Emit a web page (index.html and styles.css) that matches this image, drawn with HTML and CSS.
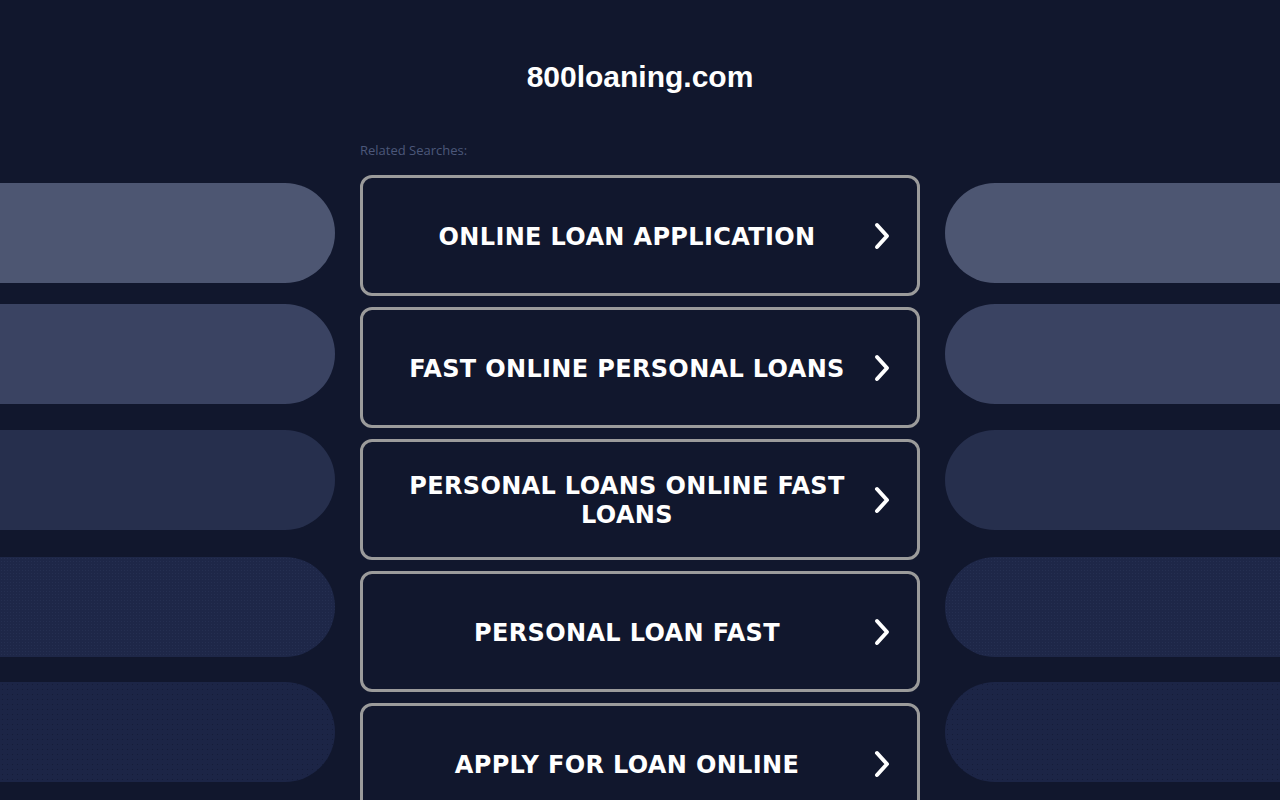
FILE: index.html
```html
<!DOCTYPE html>
<html lang="en">
<head>
<meta charset="utf-8">
<title>800loaning.com</title>
<link rel="stylesheet" href="styles.css">
</head>
<body>
<div class="page">
  <aside class="side side-left">
    <div class="pill p1"></div>
    <div class="pill p2"></div>
    <div class="pill p3"></div>
    <div class="pill p4"></div>
    <div class="pill p5"></div>
  </aside>
  <main class="center">
    <h1 class="title">800loaning.com</h1>
    <div class="related">Related Searches:</div>
    <div class="links">
      <a class="link" href="#"><span class="label">ONLINE LOAN APPLICATION</span><svg class="chev" width="16" height="28" viewBox="0 0 16 28"><polyline points="3,3 13,14 3,25" fill="none" stroke="#fff" stroke-width="4" stroke-linecap="round" stroke-linejoin="round"/></svg></a>
      <a class="link" href="#"><span class="label">FAST ONLINE PERSONAL LOANS</span><svg class="chev" width="16" height="28" viewBox="0 0 16 28"><polyline points="3,3 13,14 3,25" fill="none" stroke="#fff" stroke-width="4" stroke-linecap="round" stroke-linejoin="round"/></svg></a>
      <a class="link" href="#"><span class="label">PERSONAL LOANS ONLINE FAST LOANS</span><svg class="chev" width="16" height="28" viewBox="0 0 16 28"><polyline points="3,3 13,14 3,25" fill="none" stroke="#fff" stroke-width="4" stroke-linecap="round" stroke-linejoin="round"/></svg></a>
      <a class="link" href="#"><span class="label">PERSONAL LOAN FAST</span><svg class="chev" width="16" height="28" viewBox="0 0 16 28"><polyline points="3,3 13,14 3,25" fill="none" stroke="#fff" stroke-width="4" stroke-linecap="round" stroke-linejoin="round"/></svg></a>
      <a class="link" href="#"><span class="label">APPLY FOR LOAN ONLINE</span><svg class="chev" width="16" height="28" viewBox="0 0 16 28"><polyline points="3,3 13,14 3,25" fill="none" stroke="#fff" stroke-width="4" stroke-linecap="round" stroke-linejoin="round"/></svg></a>
    </div>
  </main>
  <aside class="side side-right">
    <div class="pill p1"></div>
    <div class="pill p2"></div>
    <div class="pill p3"></div>
    <div class="pill p4"></div>
    <div class="pill p5"></div>
  </aside>
</div>
</body>
</html>
```
FILE: styles.css
```css
html, body {
  margin: 0;
  padding: 0;
  background: #11172d;
  height: 800px;
  overflow: hidden;
}

.page {
  display: grid;
  grid-template-columns: 335px 560px 335px;
  column-gap: 25px;
  width: 1280px;
}

.side {
  display: flex;
  flex-direction: column;
  padding-top: 183px;
}

.pill {
  height: 100px;
  flex: none;
}

.side-left .pill { border-radius: 0 50px 50px 0; }
.side-right .pill { border-radius: 50px 0 0 50px; }

.pill.p1 { background: #4d5672; }
.pill.p2 { background: #3a4362; margin-top: 21px; }
.pill.p3 { background: #262f4d; margin-top: 26px; }
.pill.p4 {
  background-color: #1e2748;
  background-image: radial-gradient(rgba(60, 72, 110, 0.25) 0.6px, transparent 0.8px);
  background-size: 3px 3px;
  margin-top: 27px;
}
.pill.p5 {
  background-color: #1c2546;
  background-image: radial-gradient(rgba(10, 14, 30, 0.35) 0.6px, transparent 0.8px);
  background-size: 5px 5px;
  margin-top: 25px;
}

.center {
  display: flex;
  flex-direction: column;
}

.title {
  margin: 0;
  padding-top: 59px;
  height: 36px;
  line-height: 36px;
  font-family: "Liberation Sans", Arial, sans-serif;
  font-weight: 700;
  font-size: 30px;
  color: #ffffff;
  text-align: center;
}

.related {
  margin-top: 47px;
  height: 16px;
  line-height: 16px;
  font-family: "Open Sans", "Noto Sans", sans-serif;
  font-size: 13px;
  color: #4c577a;
}

.links {
  margin-top: 17px;
  display: flex;
  flex-direction: column;
  gap: 11px;
}

.link {
  box-sizing: border-box;
  height: 121px;
  border: 3px solid #9b9b9b;
  border-radius: 12px;
  display: flex;
  align-items: center;
  padding: 0 27px 0 40px;
  gap: 23px;
  text-decoration: none;
  background: #11172d;
}

.label {
  flex: 1;
  padding-top: 3px;
  text-align: center;
  font-family: "DejaVu Sans", Verdana, sans-serif;
  font-weight: 700;
  font-size: 24px;
  line-height: 29px;
  letter-spacing: 0.35px;
  color: #ffffff;
}

.chev {
  flex: none;
  display: block;
}
```
